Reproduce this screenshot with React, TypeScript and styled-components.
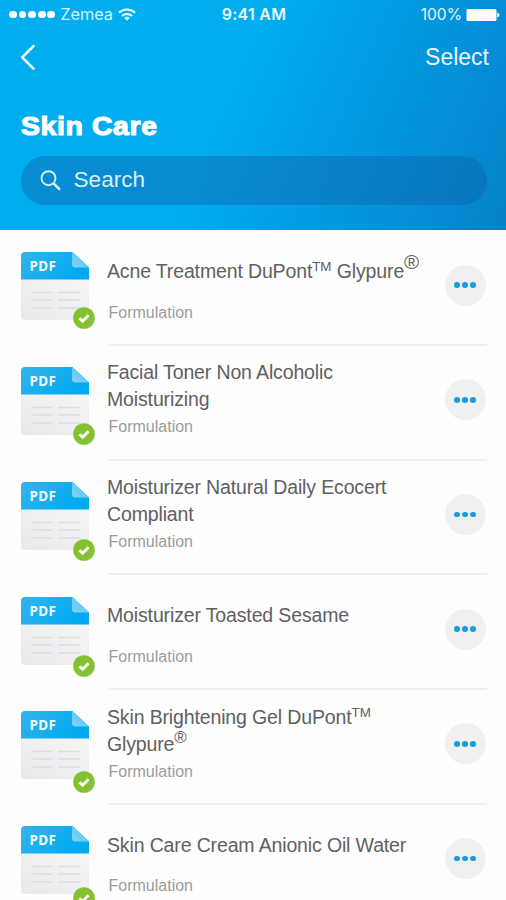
import React from "react";
import styled, { createGlobalStyle } from "styled-components";

const GlobalStyle = createGlobalStyle`
  * { box-sizing: border-box; }
  html, body { margin: 0; padding: 0; background: #fefefe; }
  body { font-family: "Liberation Sans", Arial, sans-serif; overflow: hidden; }
`;

const Screen = styled.div`
  width: 506px;
  height: 900px;
  overflow: hidden;
  background: #fefefe;
`;

const Header = styled.header`
  height: 229.5px;
  background: linear-gradient(114deg, #00aeef 0%, #00aeef 44%, #029fe4 62%, #0491d9 80%, #0580ca 100%);
  color: #fff;
`;

const StatusBar = styled.div`
  display: grid;
  grid-template-columns: 1fr auto 1fr;
  align-items: center;
  height: 29px;
  padding: 0 6px 0 9px;
  font-family: Inter, "Liberation Sans", sans-serif;
  line-height: 29px;
`;

const Carrier = styled.div`
  display: flex;
  align-items: center;
  font-size: 16.3px;
  color: #d9f3fd;
`;

const Signal = styled.div`
  display: flex;
  gap: 1.8px;
  margin-right: 5px;
`;

const SignalDot = styled.span`
  width: 7.8px;
  height: 7.8px;
  border-radius: 50%;
  background: #fff;
`;

const WifiIcon = styled.svg`
  width: 18px;
  height: 13px;
  margin: 0 0 1px 5.5px;
`;

const Clock = styled.div`
  margin-right: 1px;
  font-weight: 600;
  font-size: 16px;
  letter-spacing: 0.25px;
  color: #e8f7fd;
`;

const Power = styled.div`
  display: flex;
  align-items: center;
  justify-content: flex-end;
  gap: 4px;
  font-size: 15.6px;
  color: #e3f3fc;
`;

const BatteryIcon = styled.svg`
  width: 34px;
  height: 14px;
`;

const NavBar = styled.nav`
  display: flex;
  align-items: center;
  justify-content: space-between;
  height: 58px;
  padding: 0 17px 2px 20px;
`;

const BackIcon = styled.svg`
  width: 16px;
  height: 28px;
`;

const SelectButton = styled.button`
  border: 0;
  padding: 0;
  background: none;
  color: #eaf7fd;
  font: 23px/28px "Liberation Sans", Arial, sans-serif;
`;

const Title = styled.h1`
  width: max-content;
  margin: 24px 0 0 21px;
  font-size: 26px;
  line-height: 30px;
  font-weight: 700;
  letter-spacing: 0.6px;
  transform: scaleX(1.09);
  transform-origin: left center;
  -webkit-text-stroke: 1.2px #fff;
`;

const SearchField = styled.div`
  display: flex;
  align-items: center;
  height: 49px;
  margin: 14.5px 19.5px 0 21px;
  padding-left: 19px;
  border-radius: 24.5px;
  background: rgba(16, 98, 176, 0.45);
  color: #d8effb;
  font-size: 22.6px;
`;

const SearchIcon = styled.svg`
  width: 21px;
  height: 21px;
  margin-right: 12.5px;
`;

const List = styled.ul`
  margin: 1.8px 0 0;
  padding: 0;
  list-style: none;
`;

const Row = styled.li`
  display: flex;
  height: 114.7px;
  padding: 0 19px 0 21px;
`;

const Thumb = styled.div`
  position: relative;
  flex: none;
  width: 87.5px;
  padding-top: 21.2px;
`;

const FileIcon = styled.svg`
  display: block;
  width: 68px;
  height: 68px;
`;

const FileType = styled.span`
  position: absolute;
  left: 8.6px;
  top: 26.2px;
  color: #f1fbff;
  font: 700 13.5px/18px "Noto Sans", "Open Sans", sans-serif;
  letter-spacing: 0.3px;
`;

const DoneBadge = styled.svg<{ $top: number }>`
  position: absolute;
  left: 52px;
  top: ${(p) => p.$top}px;
  width: 22px;
  height: 22px;
`;

const Body = styled.div`
  display: flex;
  flex: 1;
  border-bottom: 2px solid #efefee;
`;

const Info = styled.div`
  flex: 1;
  padding-top: 13.5px;
`;

const NameBox = styled.div`
  display: flex;
  align-items: center;
  height: 54px;
`;

const Name = styled.div`
  margin-left: -1.5px;
  color: #606062;
  font-size: 19.5px;
  line-height: 27px;
  letter-spacing: -0.14px;
  white-space: nowrap;
`;

const Mark = styled.sup<{ $size: number; $lift: number }>`
  font-size: ${(p) => p.$size}px;
  line-height: 0;
  vertical-align: ${(p) => p.$lift}px;
  letter-spacing: 0;
`;

const Kind = styled.div`
  margin-top: 4px;
  color: #9b9b9d;
  font-size: 16px;
  line-height: 20px;
`;

const MoreButton = styled.button`
  display: flex;
  align-items: center;
  justify-content: center;
  gap: 2.6px;
  flex: none;
  width: 41px;
  height: 41px;
  margin: 33.4px 1.5px 0 0;
  padding: 0;
  border: 0;
  border-radius: 50%;
  background: #f0f0f0;
`;

const MoreDot = styled.span`
  width: 5.6px;
  height: 5.6px;
  border-radius: 50%;
  background: #189fe2;
`;

const TM = () => <Mark $size={13.4} $lift={7.3}>TM</Mark>;

const documents = [
  { name: <>Acne Treatment DuPont<TM /> Glypure<Mark $size={20.5} $lift={9.5}>®</Mark></>, badge: 75.3 },
  { name: <>Facial Toner Non Alcoholic<br />Moisturizing</>, badge: 76.6 },
  { name: <>Moisturizer Natural Daily Ecocert<br />Compliant</>, badge: 77.9 },
  { name: <>Moisturizer Toasted Sesame</>, badge: 79.2 },
  { name: <>Skin Brightening Gel DuPont<TM /><br />Glypure<Mark $size={17} $lift={8.3}>®</Mark></>, badge: 80.5 },
  { name: <>Skin Care Cream Anionic Oil Water</>, badge: 81.8 },
];

const PdfFile = () => (
  <FileIcon viewBox="0 0 68 68">
    <defs>
      <linearGradient id="sheet" x1="1" y1="0" x2="0" y2="1">
        <stop offset="0" stopColor="#f4f5f6" />
        <stop offset="1" stopColor="#e9e9eb" />
      </linearGradient>
      <linearGradient id="band" x1="0" y1="0" x2="1" y2="0.4">
        <stop offset="0" stopColor="#35b3ec" />
        <stop offset="1" stopColor="#00aaf0" />
      </linearGradient>
      <linearGradient id="fold" x1="0" y1="1" x2="1" y2="0">
        <stop offset="0" stopColor="#82d3f7" />
        <stop offset="1" stopColor="#4fc1f3" />
      </linearGradient>
    </defs>
    <path d="M0 27h68v37a4 4 0 0 1-4 4H4a4 4 0 0 1-4-4z" fill="url(#sheet)" />
    <path d="M4 0h47.5L68 15.5V27.5H0V4a4 4 0 0 1 4-4z" fill="url(#band)" />
    <path d="M51 0 68 15.5H54.5A3.5 3.5 0 0 1 51 12z" fill="url(#fold)" />
    <path d="M10.5 40.5h21M37 40.5h22.5M10.5 48h21M37 48h22.5M10.5 56h21M37 56h22.5" stroke="#dcdddf" strokeWidth="1.3" />
  </FileIcon>
);

export default function App() {
  return (
    <Screen>
      <GlobalStyle />
      <Header>
        <StatusBar>
          <Carrier>
            <Signal>
              {[0, 1, 2, 3, 4].map((i) => <SignalDot key={i} />)}
            </Signal>
            Zemea
            <WifiIcon viewBox="0 0 18 13" fill="none" stroke="#e8f8ff" strokeWidth="2">
              <path d="M1 4.8a11.4 11.4 0 0 1 16 0M4 8a7.1 7.1 0 0 1 10 0" />
              <path d="M6.2 10a4 4 0 0 1 5.6 0L9 12.8z" fill="#e8f8ff" stroke="none" />
            </WifiIcon>
          </Carrier>
          <Clock>9:41 AM</Clock>
          <Power>
            100%
            <BatteryIcon viewBox="0 0 34 14" fill="#fff">
              <rect x="0.5" y="1" width="30" height="12" rx="1.5" />
              <path d="M31.3 4.8c2.8.3 2.8 4.1 0 4.4z" />
            </BatteryIcon>
          </Power>
        </StatusBar>
        <NavBar>
          <BackIcon viewBox="0 0 16 28" fill="none" stroke="#fff" strokeWidth="2.5" strokeLinecap="round" strokeLinejoin="round">
            <path d="M13.5 3 2.2 14.4 13.5 25.7" />
          </BackIcon>
          <SelectButton>Select</SelectButton>
        </NavBar>
        <Title>Skin Care</Title>
        <SearchField>
          <SearchIcon viewBox="0 0 21 21" fill="none" stroke="#d8effb" strokeLinecap="round">
            <circle cx="8.5" cy="8.2" r="7" strokeWidth="1.9" />
            <path d="m13.7 13.6 5.5 5.4" strokeWidth="2.5" />
          </SearchIcon>
          Search
        </SearchField>
      </Header>
      <List>
        {documents.map((doc, i) => (
          <Row key={i}>
            <Thumb>
              <PdfFile />
              <FileType>PDF</FileType>
              <DoneBadge $top={doc.badge} viewBox="0 0 22 22">
                <circle cx="11" cy="11" r="10.8" fill="#84c12f" />
                <path d="m6.4 11.2 3.2 3.1 6-6" fill="none" stroke="#fff" strokeWidth="2.7" />
              </DoneBadge>
            </Thumb>
            <Body>
              <Info>
                <NameBox><Name>{doc.name}</Name></NameBox>
                <Kind>Formulation</Kind>
              </Info>
              <MoreButton aria-label="More">
                <MoreDot /><MoreDot /><MoreDot />
              </MoreButton>
            </Body>
          </Row>
        ))}
      </List>
    </Screen>
  );
}
